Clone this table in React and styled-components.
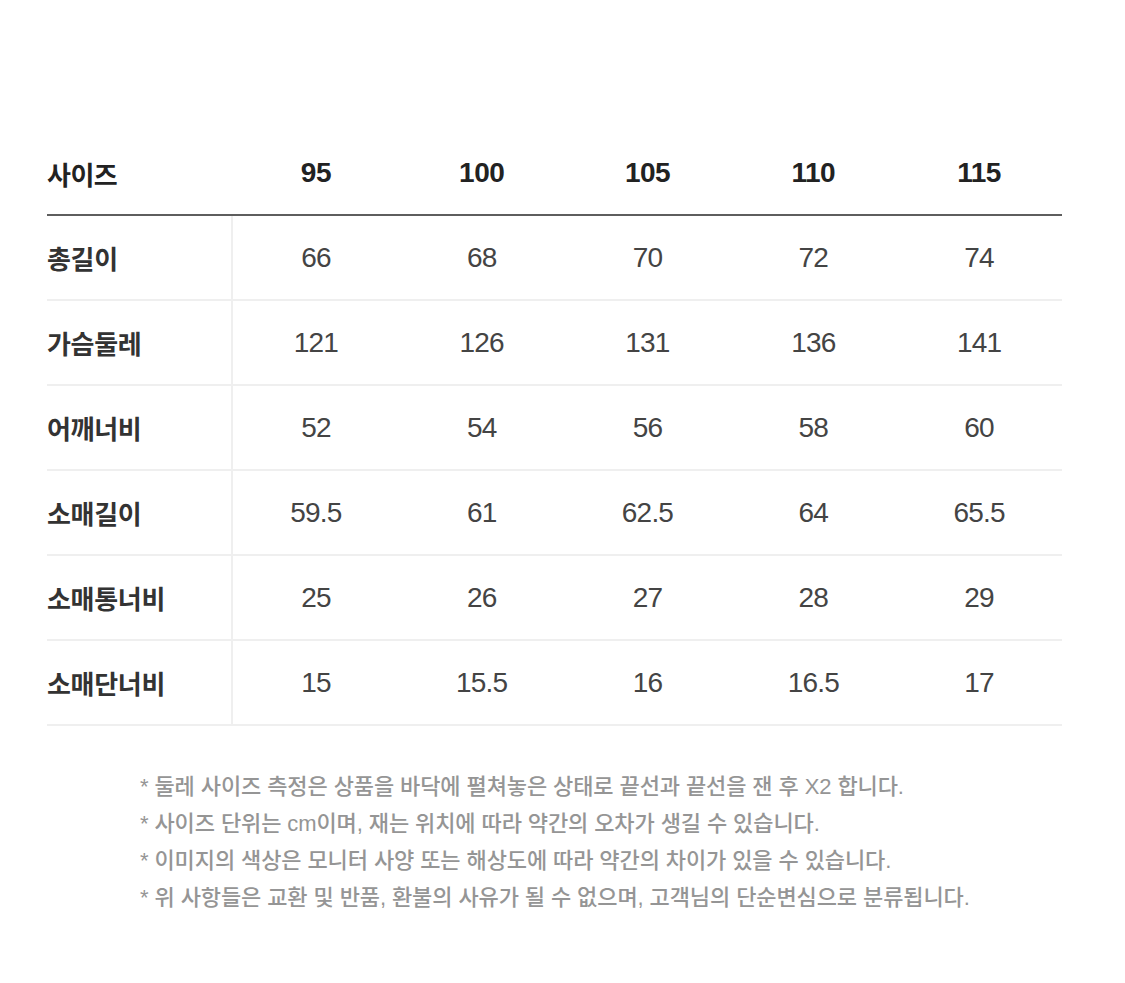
import React from "react";
import styled, { createGlobalStyle } from "styled-components";

const Global = createGlobalStyle`
  html, body { margin: 0; padding: 0; background: #fff; }
  body { font-family: "Liberation Sans", "Noto Sans CJK KR", sans-serif; }
`;

const Page = styled.div`
  width: 1125px;
  height: 983px;
  background: #fff;
  padding: 131px 63px 0 47px;
  box-sizing: border-box;
`;

const Table = styled.div`
  display: grid;
  grid-template-columns: 186px repeat(5, 1fr);
  width: 1015px;
`;

const HeadCell = styled.div`
  height: 85px;
  display: flex;
  align-items: center;
  justify-content: ${(p) => (p.$label ? "flex-start" : "center")};
  border-bottom: 2px solid #5e5e5e;
  box-sizing: border-box;
  padding-top: 1px;
  font-size: ${(p) => (p.$label ? "26px" : "28px")};
  letter-spacing: -0.5px;
  font-weight: 700;
  color: #222;
`;

const Label = styled.div`
  height: 85px;
  display: flex;
  align-items: center;
  border-bottom: 2px solid #efefef;
  border-right: 2px solid #efefef;
  box-sizing: border-box;
  font-size: 26px;
  letter-spacing: -0.3px;
  font-weight: 700;
  color: #333;
`;

const Value = styled.div`
  height: 85px;
  display: flex;
  align-items: center;
  justify-content: center;
  border-bottom: 2px solid #efefef;
  box-sizing: border-box;
  font-size: 28px;
  letter-spacing: -0.8px;
  color: #444;
`;

const Notes = styled.ul`
  list-style: none;
  margin: 42px 0 0 93px;
  padding: 0;
  display: flex;
  flex-direction: column;
`;

const Note = styled.li`
  font-size: 22px;
  line-height: 37px;
  letter-spacing: -0.1px;
  font-weight: 500;
  color: #959595;
  white-space: nowrap;
`;

const sizes = ["95", "100", "105", "110", "115"];
const rows = [
  ["총길이", ["66", "68", "70", "72", "74"]],
  ["가슴둘레", ["121", "126", "131", "136", "141"]],
  ["어깨너비", ["52", "54", "56", "58", "60"]],
  ["소매길이", ["59.5", "61", "62.5", "64", "65.5"]],
  ["소매통너비", ["25", "26", "27", "28", "29"]],
  ["소매단너비", ["15", "15.5", "16", "16.5", "17"]],
];

const notes = [
  "* 둘레 사이즈 측정은 상품을 바닥에 펼쳐놓은 상태로 끝선과 끝선을 잰 후 X2 합니다.",
  "* 사이즈 단위는 cm이며, 재는 위치에 따라 약간의 오차가 생길 수 있습니다.",
  "* 이미지의 색상은 모니터 사양 또는 해상도에 따라 약간의 차이가 있을 수 있습니다.",
  "* 위 사항들은 교환 및 반품, 환불의 사유가 될 수 없으며, 고객님의 단순변심으로 분류됩니다.",
];

export default function App() {
  return (
    <>
      <Global />
      <Page>
        <Table>
          <HeadCell $label>사이즈</HeadCell>
          {sizes.map((s) => (
            <HeadCell key={s}>{s}</HeadCell>
          ))}
          {rows.map(([label, vals]) => (
            <React.Fragment key={label}>
              <Label>{label}</Label>
              {vals.map((v, i) => (
                <Value key={i}>{v}</Value>
              ))}
            </React.Fragment>
          ))}
        </Table>
        <Notes>
          {notes.map((n) => (
            <Note key={n}>{n}</Note>
          ))}
        </Notes>
      </Page>
    </>
  );
}
